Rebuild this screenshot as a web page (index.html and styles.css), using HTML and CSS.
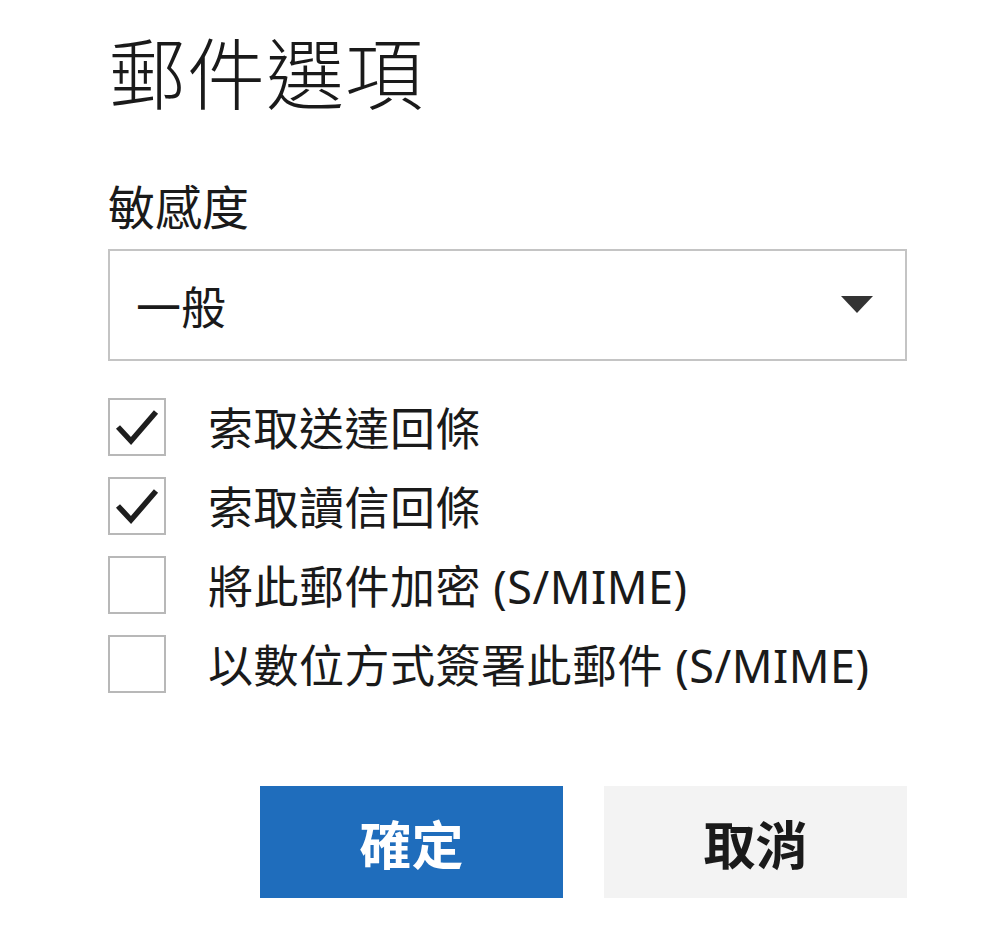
FILE: index.html
```html
<!DOCTYPE html>
<html lang="zh-Hant">
<head>
    <meta charset="UTF-8">
    <meta name="viewport" content="width=device-width, initial-scale=1.0">
    <title>郵件選項</title>
    <link rel="stylesheet" href="styles.css">
</head>
<body>
    <div class="dialog">
        <h1 class="dialog-title">郵件選項</h1>

        <label class="field-label" for="sensitivity">敏感度</label>
        <div class="select-box" id="sensitivity">
            <span class="select-value">一般</span>
            <svg class="select-arrow" width="32" height="18" viewBox="0 0 32 18">
                <polygon points="0,0 32,0 16,17" fill="#333"/>
            </svg>
        </div>

        <ul class="option-list">
            <li class="option">
                <span class="checkbox checked">
                    <svg width="46" height="40" viewBox="0 0 46 40">
                        <polyline points="4,20 17,34 42,5" fill="none" stroke="#1e1e1e" stroke-width="5.5"/>
                    </svg>
                </span>
                <span class="option-text">索取送達回條</span>
            </li>
            <li class="option">
                <span class="checkbox checked">
                    <svg width="46" height="40" viewBox="0 0 46 40">
                        <polyline points="4,20 17,34 42,5" fill="none" stroke="#1e1e1e" stroke-width="5.5"/>
                    </svg>
                </span>
                <span class="option-text">索取讀信回條</span>
            </li>
            <li class="option">
                <span class="checkbox"></span>
                <span class="option-text">將此郵件加密 (S/MIME)</span>
            </li>
            <li class="option">
                <span class="checkbox"></span>
                <span class="option-text">以數位方式簽署此郵件 (S/MIME)</span>
            </li>
        </ul>

        <div class="actions">
            <button class="btn btn-primary">確定</button>
            <button class="btn btn-secondary">取消</button>
        </div>
    </div>
</body>
</html>
```

FILE: styles.css
```css
body {
    margin: 0;
    padding: 0;
    background-color: #ffffff;
    color: #1a1a1a;
    font-family: "Noto Sans", "Noto Sans CJK TC", sans-serif;
}

.dialog {
    width: 799px;
    padding: 29px 0 0 108px;
}

.dialog-title {
    margin: 0;
    font-size: 78px;
    font-weight: 300;
    line-height: 90px;
    letter-spacing: 1px;
}

.field-label {
    display: block;
    margin-top: 58px;
    font-size: 47px;
    line-height: 60px;
}

.select-box {
    display: flex;
    align-items: center;
    justify-content: space-between;
    height: 108px;
    margin-top: 12px;
    padding: 0 32px 0 26px;
    border: 2px solid #c4c4c4;
}

.select-value {
    font-size: 45px;
}

.option-list {
    list-style-type: none;
    margin: 26px 0 0;
    padding: 0;
}

.option {
    display: flex;
    align-items: center;
    height: 79px;
}

.checkbox {
    display: flex;
    align-items: center;
    justify-content: center;
    box-sizing: border-box;
    width: 58px;
    height: 58px;
    border: 2px solid #b8b8b8;
    background-color: #fff;
}

.option-text {
    margin-left: 42px;
    font-size: 45px;
    letter-spacing: 0.5px;
}

.actions {
    display: flex;
    justify-content: flex-end;
    gap: 41px;
    margin-top: 83px;
}

.btn {
    width: 303px;
    height: 112px;
    border: none;
    font-family: inherit;
    font-size: 52px;
    font-weight: bold;
}

.btn-primary {
    background-color: #1f6dbc;
    color: #ffffff;
}

.btn-secondary {
    background-color: #f3f3f3;
    color: #1a1a1a;
}
```
